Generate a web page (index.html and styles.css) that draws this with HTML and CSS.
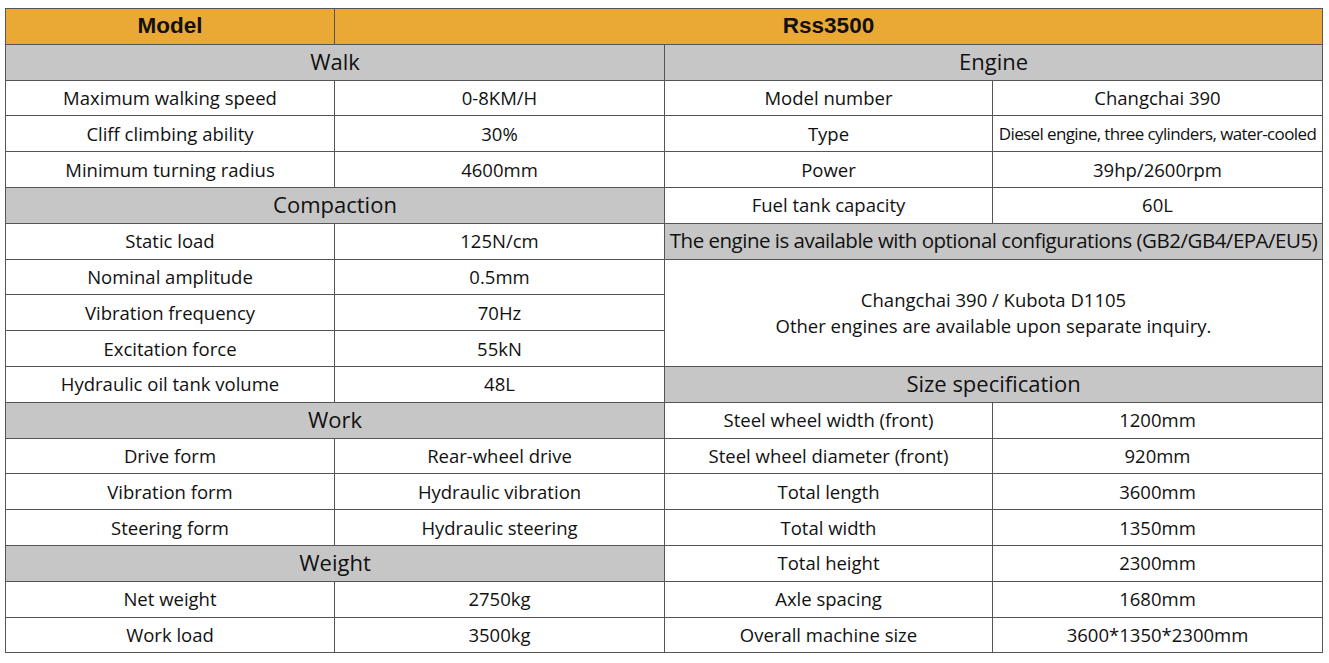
FILE: index.html
```html
<!DOCTYPE html>
<html lang="en">
<head>
<meta charset="utf-8">
<title>Rss3500 specification</title>
<link rel="stylesheet" href="styles.css">
</head>
<body>
<table class="spec">
  <colgroup>
    <col class="c1"><col class="c2"><col class="c3"><col class="c4">
  </colgroup>
  <tr class="head">
    <td>Model</td>
    <td colspan="3">Rss3500</td>
  </tr>
  <tr>
    <td colspan="2" class="sec">Walk</td>
    <td colspan="2" class="sec">Engine</td>
  </tr>
  <tr>
    <td>Maximum walking speed</td><td>0-8KM/H</td>
    <td>Model number</td><td>Changchai 390</td>
  </tr>
  <tr>
    <td>Cliff climbing ability</td><td>30%</td>
    <td>Type</td><td class="tight">Diesel engine, three cylinders, water-cooled</td>
  </tr>
  <tr>
    <td>Minimum turning radius</td><td>4600mm</td>
    <td>Power</td><td>39hp/2600rpm</td>
  </tr>
  <tr>
    <td colspan="2" class="sec">Compaction</td>
    <td>Fuel tank capacity</td><td>60L</td>
  </tr>
  <tr>
    <td>Static load</td><td>125N/cm</td>
    <td colspan="2" class="sec note">The engine is available with optional configurations (GB2/GB4/EPA/EU5)</td>
  </tr>
  <tr>
    <td>Nominal amplitude</td><td>0.5mm</td>
    <td colspan="2" rowspan="3" class="merged">Changchai 390 / Kubota D1105<br>Other engines are available upon separate inquiry.</td>
  </tr>
  <tr>
    <td>Vibration frequency</td><td>70Hz</td>
  </tr>
  <tr>
    <td>Excitation force</td><td>55kN</td>
  </tr>
  <tr>
    <td>Hydraulic oil tank volume</td><td>48L</td>
    <td colspan="2" class="sec">Size specification</td>
  </tr>
  <tr>
    <td colspan="2" class="sec">Work</td>
    <td>Steel wheel width (front)</td><td>1200mm</td>
  </tr>
  <tr>
    <td>Drive form</td><td>Rear-wheel drive</td>
    <td>Steel wheel diameter (front)</td><td>920mm</td>
  </tr>
  <tr>
    <td>Vibration form</td><td>Hydraulic vibration</td>
    <td>Total length</td><td>3600mm</td>
  </tr>
  <tr>
    <td>Steering form</td><td>Hydraulic steering</td>
    <td>Total width</td><td>1350mm</td>
  </tr>
  <tr>
    <td colspan="2" class="sec">Weight</td>
    <td>Total height</td><td>2300mm</td>
  </tr>
  <tr>
    <td>Net weight</td><td>2750kg</td>
    <td>Axle spacing</td><td>1680mm</td>
  </tr>
  <tr>
    <td>Work load</td><td>3500kg</td>
    <td>Overall machine size</td><td>3600*1350*2300mm</td>
  </tr>
</table>
</body>
</html>
```
FILE: styles.css
```css
html, body {
  margin: 0;
  padding: 0;
  background: #ffffff;
}

body {
  padding: 8px 0 0 5px;
  font-family: "Open Sans", "Noto Sans", sans-serif;
  color: #111111;
}

.spec {
  border-collapse: collapse;
  table-layout: fixed;
  width: 1317px;
}

.c1 { width: 329px; }
.c2 { width: 330px; }
.c3 { width: 328px; }
.c4 { width: 330px; }

.spec td {
  border: 1px solid #555555;
  height: 34.8px;
  padding: 0 2px;
  text-align: center;
  vertical-align: middle;
  font-size: 18.5px;
  line-height: 20px;
  white-space: nowrap;
  overflow: hidden;
}

.head td {
  background: #eaa934;
  font-family: "Liberation Sans", Arial, sans-serif;
  font-weight: bold;
  font-size: 22.5px;
}

.spec td.sec {
  background: #c6c6c6;
  font-size: 22px;
  height: 31.8px;
  padding-bottom: 3px;
}

.spec td.note {
  font-size: 20.5px;
  letter-spacing: -0.5px;
  height: 32.8px;
  padding: 0 0 2px;
}

.spec td.tight {
  font-size: 17px;
  letter-spacing: -0.62px;
  padding: 0;
}

.spec td.merged {
  line-height: 26px;
}
```
